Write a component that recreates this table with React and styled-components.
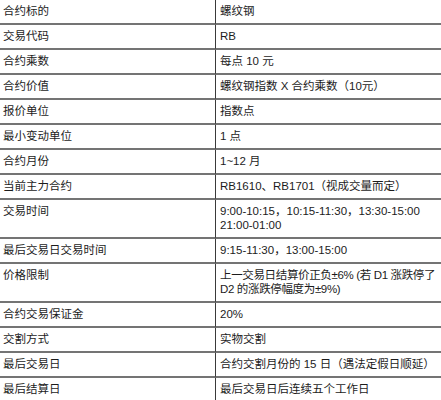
import styled, { createGlobalStyle } from 'styled-components';

const GlobalStyle = createGlobalStyle`
  html, body {
    margin: 0;
    padding: 0;
    background: #fff;
  }
  body {
    font-family: "Liberation Sans", "Noto Sans CJK SC", sans-serif;
  }
`;

const Table = styled.div`
  width: 441px;
  display: grid;
  grid-template-columns: 216px 1fr;
  color: #1c1c1c;
  font-size: 11.5px;
`;

const Cell = styled.div`
  padding: 4px 0 5px ${props => (props.$key ? '3px' : '4px')};
  line-height: 14px;
  border-bottom: 2px solid #747474;
  border-right: ${props => (props.$key ? '1px solid #3a3a3a' : 'none')};
  white-space: nowrap;
  overflow: hidden;
  letter-spacing: ${props => (props.$tight ? '-0.35px' : 'normal')};
`;

const rows = [
  ['合约标的', '螺纹钢'],
  ['交易代码', 'RB'],
  ['合约乘数', '每点 10 元'],
  ['合约价值', '螺纹钢指数 X 合约乘数（10元）'],
  ['报价单位', '指数点'],
  ['最小变动单位', '1 点'],
  ['合约月份', '1~12 月'],
  ['当前主力合约', 'RB1610、RB1701（视成交量而定）'],
  ['交易时间', ['9:00-10:15，10:15-11:30，13:30-15:00', '21:00-01:00']],
  ['最后交易日交易时间', '9:15-11:30，13:00-15:00'],
  ['价格限制', ['上一交易日结算价正负±6% (若 D1 涨跌停了', 'D2 的涨跌停幅度为±9%)'], true],
  ['合约交易保证金', '20%'],
  ['交割方式', '实物交割'],
  ['最后交易日', '合约交割月份的 15 日（遇法定假日顺延）'],
  ['最后结算日', '最后交易日后连续五个工作日'],
];

function App() {
  return (
    <>
      <GlobalStyle />
      <Table>
        {rows.map(([name, value, tight]) => [
          <Cell key={name + '-k'} $key>
            {name}
          </Cell>,
          <Cell key={name + '-v'} $tight={tight}>
            {Array.isArray(value)
              ? value.map((line, i) => <div key={i}>{line}</div>)
              : value}
          </Cell>,
        ])}
      </Table>
    </>
  );
}

export default App;
